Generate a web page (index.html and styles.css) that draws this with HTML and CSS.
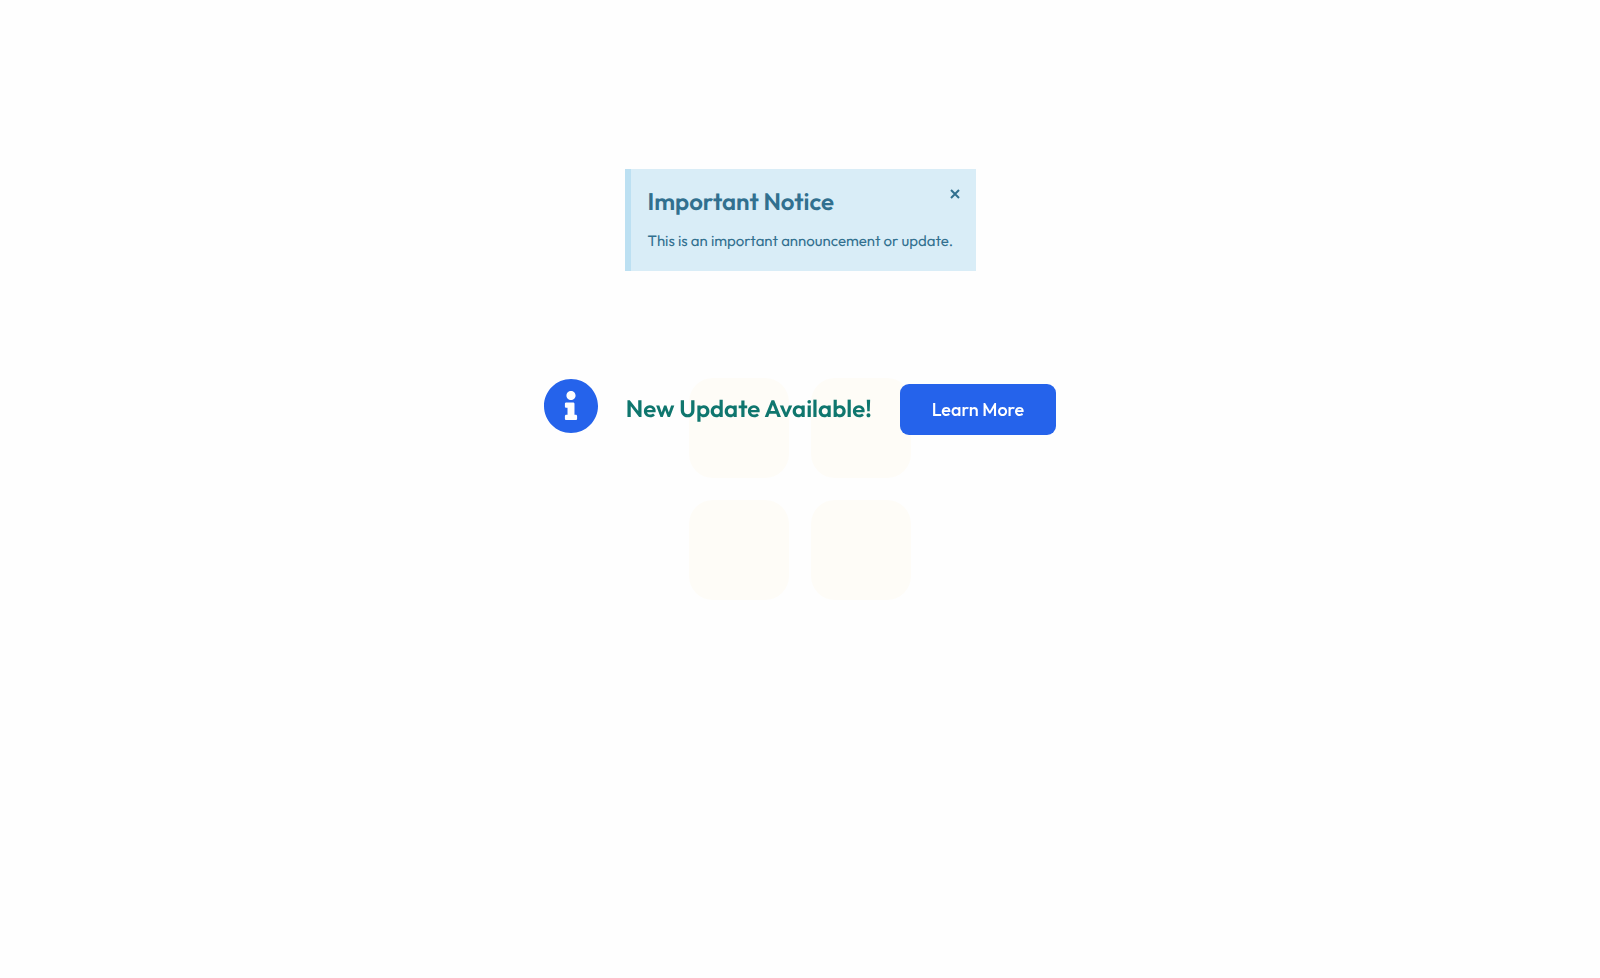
FILE: index.html
```html
<!DOCTYPE html>
<html lang="en">
<head>
  <meta charset="UTF-8">
  <meta name="viewport" content="width=device-width, initial-scale=1.0">
  <title>Important Notice</title>
  <link rel="stylesheet" href="styles.css">
</head>
<body>
  <!-- Faint tiles behind the page -->
  <div class="tiles" aria-hidden="true">
    <span></span>
    <span></span>
    <span></span>
    <span></span>
  </div>

  <main class="page">
    <section class="notice">
      <button class="notice-close" type="button" aria-label="Close">
        <svg viewBox="0 0 10 10" width="10" height="10"><path d="M1 1 9 9M9 1 1 9"/></svg>
      </button>
      <h2>Important Notice</h2>
      <p>This is an important announcement or update.</p>
    </section>

    <section class="banner">
      <div class="banner-icon">
        <svg viewBox="8 8 496 496" width="54" height="54" aria-hidden="true">
          <path d="M256 8C119 8 8 119.100 8 256c0 137 111 248 248 248s248-111 248-248C504 119.100 393 8 256 8zm0 110c23.200 0 42 18.800 42 42s-18.800 42-42 42-42-18.800-42-42 18.800-42 42-42zm56 254c0 6.600-5.400 12-12 12h-88c-6.600 0-12-5.400-12-12v-24c0-6.600 5.400-12 12-12h12v-64h-12c-6.600 0-12-5.400-12-12v-24c0-6.600 5.400-12 12-12h64c6.600 0 12 5.400 12 12v100h12c6.600 0 12 5.400 12 12v24z"/>
        </svg>
      </div>
      <h2>New Update Available!</h2>
      <button class="learn-more" type="button">Learn More</button>
    </section>
  </main>
</body>
</html>
```
FILE: styles.css
```css
* {
  box-sizing: border-box;
}

body {
  margin: 0;
  min-height: 100vh;
  background: #fefefe;
  font-family: Outfit, Lato, sans-serif;
  text-rendering: geometricPrecision;
}

h2 {
  margin: 0;
  font-size: 24px;
  line-height: 32px;
  font-weight: 600;
}

.tiles {
  position: fixed;
  inset: 0;
  display: grid;
  grid-template-columns: 100px 100px;
  grid-auto-rows: 100px;
  gap: 22px;
  place-content: center;
}

.tiles span {
  background: #fefcf7;
  border-radius: 24px;
}

.page {
  position: relative;
  display: flex;
  flex-direction: column;
  align-items: center;
  gap: 108px;
  padding: 169px 16px 16px;
}

.notice {
  position: relative;
  min-width: 351px;
  padding: 17px;
  background: #d9edf7;
  border-left: 6px solid #bce0f2;
  color: #31708f;
}

.notice h2 {
  margin-bottom: 12px;
}

.notice p {
  margin: 0 0 2px;
  font-size: 15px;
  line-height: 22px;
}

.notice-close {
  position: absolute;
  top: 16px;
  right: 12px;
  display: flex;
  padding: 4px;
  border: 0;
  background: none;
  color: inherit;
  cursor: pointer;
}

.notice-close svg {
  fill: none;
  stroke: currentColor;
  stroke-width: 2;
}

.banner {
  display: flex;
  align-items: center;
  gap: 28px;
}

.banner-icon {
  padding-bottom: 6px;
}

.banner-icon svg {
  display: block;
  fill: #2563eb;
}

.banner h2 {
  color: #0f766e;
}

.learn-more {
  padding: 14px 32px;
  border: 0;
  border-radius: 9px;
  background: #2563eb;
  color: #fff;
  font-family: inherit;
  font-size: 18px;
  line-height: 23px;
  font-weight: 500;
  cursor: pointer;
}
```
